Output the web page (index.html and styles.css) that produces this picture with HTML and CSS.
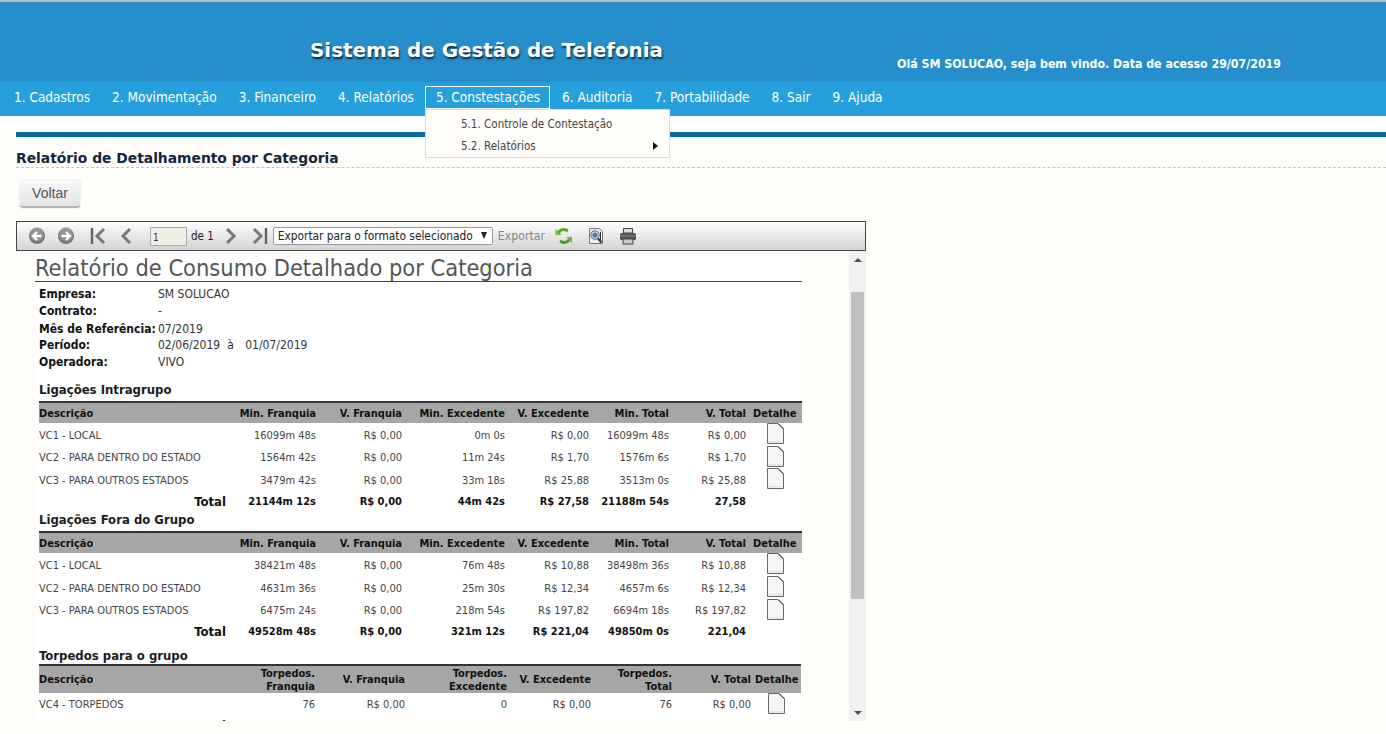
FILE: index.html
```html
<!DOCTYPE html>
<html lang="pt-BR">
<head>
    <meta charset="UTF-8">
    <title>Sistema de Gestão de Telefonia</title>
    <link rel="stylesheet" href="styles.css">
</head>
<body>
    <svg class="defs" width="0" height="0">
        <symbol id="doc" viewBox="0 0 17 21">
            <path d="M.5.5H11L16.500 6V20.500H.5Z" fill="#f6f6f6" stroke="#666"/>
            <path d="M11 .5L16.500 6" stroke="#333" fill="none"/>
            <path d="M1.500 18H15.500V19.500H1.500Z" fill="#e2e2e2"/>
        </symbol>
    </svg>

    <header class="top">
        <h1>Sistema de Gestão de Telefonia</h1>
        <span class="welcome">Olá SM SOLUCAO, seja bem vindo. Data de acesso 29/07/2019</span>
    </header>

    <nav class="menu">
        <a href="#">1. Cadastros</a>
        <a href="#">2. Movimentação</a>
        <a href="#">3. Financeiro</a>
        <a href="#">4. Relatórios</a>
        <div class="menu-open">
            <a href="#" class="active">5. Constestações</a>
            <div class="submenu">
                <a href="#">5.1. Controle de Contestação</a>
                <a href="#">5.2. Relatórios <i class="arrow"></i></a>
            </div>
        </div>
        <a href="#">6. Auditoria</a>
        <a href="#">7. Portabilidade</a>
        <a href="#">8. Sair</a>
        <a href="#">9. Ajuda</a>
    </nav>

    <main class="content">
        <div class="blue-line"></div>
        <h2 class="page-title">Relatório de Detalhamento por Categoria</h2>
        <button class="back">Voltar</button>

        <div class="toolbar">
            <svg class="tb-round" width="18" height="18" viewBox="0 0 18 18"><circle cx="9" cy="9" r="8" fill="#777"/><circle cx="9" cy="7" r="7" fill="#a8a8a8" opacity=".6"/><path d="M13.500 9H6M9 5L5 9l4 4" stroke="#fff" stroke-width="2.400" fill="none"/></svg>
            <svg class="tb-round" width="18" height="18" viewBox="0 0 18 18"><circle cx="9" cy="9" r="8" fill="#777"/><circle cx="9" cy="7" r="7" fill="#a8a8a8" opacity=".6"/><path d="M4.500 9H12M9 5l4 4-4 4" stroke="#fff" stroke-width="2.400" fill="none"/></svg>
            <svg class="tb-first" width="18" height="18" viewBox="0 0 18 18"><path d="M2 1V17" stroke="#666" stroke-width="2.500"/><path d="M14 2L7 9l7 7" stroke="#777" stroke-width="3" fill="none"/></svg>
            <svg class="tb-prev" width="14" height="18" viewBox="0 0 14 18"><path d="M11 2L4 9l7 7" stroke="#777" stroke-width="3" fill="none"/></svg>
            <input class="page-input" type="text" value="1">
            <span class="page-of">de 1</span>
            <svg class="tb-next" width="14" height="18" viewBox="0 0 14 18"><path d="M3 2l7 7-7 7" stroke="#777" stroke-width="3" fill="none"/></svg>
            <svg class="tb-last" width="18" height="18" viewBox="0 0 18 18"><path d="M3 2l7 7-7 7" stroke="#777" stroke-width="3" fill="none"/><path d="M15 1V17" stroke="#666" stroke-width="2.500"/></svg>
            <div class="format-select">Exportar para o formato selecionado <i></i></div>
            <span class="export">Exportar</span>
            <svg class="tb-refresh" width="18" height="18" viewBox="0 0 18 18"><path d="M3 8C3 4 7 1.500 11 3l2 1" stroke="#5aa832" stroke-width="3" fill="none"/><path d="M1 3V9H7Z" fill="#6cbc3c" transform="translate(-.5 -1)"/><path d="M15 10c0 4-4 6.500-8 5l-2-1" stroke="#4d9c2b" stroke-width="3" fill="none"/><path d="M17 16V10H11Z" fill="#6cbc3c"/></svg>
            <svg class="tb-search" width="18" height="18" viewBox="0 0 18 18"><path d="M2.500 1.500H12l3.500 3V16.500H2.500Z" fill="#eee" stroke="#777"/><circle cx="8" cy="8" r="4.200" fill="#dfe8f2" stroke="#555"/><circle cx="8" cy="8" r="2.600" fill="#3f78b4"/><path d="M11 11.500l3.500 4" stroke="#333" stroke-width="2"/><path d="M13.500 5V13" stroke="#333"/></svg>
            <svg class="tb-print" width="18" height="18" viewBox="0 0 18 18"><path d="M4.500 1.500H13.500V6H4.500Z" fill="#ddd" stroke="#444"/><rect x="1" y="6" width="16" height="7" rx="1.500" fill="#555"/><path d="M1 9H17" stroke="#888"/><path d="M4 12H14V17H4Z" fill="#ccc" stroke="#444"/></svg>
        </div>

        <div class="viewer">
            <div class="report">
                <h3 class="report-title">Relatório de Consumo Detalhado por Categoria</h3>
                <div class="info">
                    <div class="info-row row-18"><b>Empresa:</b><span>SM SOLUCAO</span></div>
                    <div class="info-row row-18"><b>Contrato:</b><span>-</span></div>
                    <div class="info-row"><b>Mês de Referência:</b><span>07/2019</span></div>
                    <div class="info-row"><b>Período:</b><span>02/06/2019 <span class="to">à</span> 01/07/2019</span></div>
                    <div class="info-row row-18"><b>Operadora:</b><span>VIVO</span></div>
                </div>

                <h4 class="section first">Ligações Intragrupo</h4>
                <table class="grid">
                    <colgroup><col class="c1"><col class="c2"><col class="c3"><col class="c4"><col class="c5"><col class="c6"><col class="c7"><col class="c8"></colgroup>
                    <thead><tr><th class="left">Descrição</th><th>Min. Franquia</th><th>V. Franquia</th><th>Min. Excedente</th><th>V. Excedente</th><th>Min. Total</th><th>V. Total</th><th class="left det">Detalhe</th></tr></thead>
                    <tbody>
                        <tr><td class="left">VC1 - LOCAL</td><td>16099m 48s</td><td>R$ 0,00</td><td>0m 0s</td><td>R$ 0,00</td><td>16099m 48s</td><td>R$ 0,00</td><td class="icon"><svg class="doc"><use href="#doc"/></svg></td></tr>
                        <tr class="short"><td class="left">VC2 - PARA DENTRO DO ESTADO</td><td>1564m 42s</td><td>R$ 0,00</td><td>11m 24s</td><td>R$ 1,70</td><td>1576m 6s</td><td>R$ 1,70</td><td class="icon"><svg class="doc"><use href="#doc"/></svg></td></tr>
                        <tr><td class="left">VC3 - PARA OUTROS ESTADOS</td><td>3479m 42s</td><td>R$ 0,00</td><td>33m 18s</td><td>R$ 25,88</td><td>3513m 0s</td><td>R$ 25,88</td><td class="icon"><svg class="doc"><use href="#doc"/></svg></td></tr>
                        <tr class="total"><td class="total-label">Total</td><td>21144m 12s</td><td>R$ 0,00</td><td>44m 42s</td><td>R$ 27,58</td><td>21188m 54s</td><td>27,58</td><td></td></tr>
                    </tbody>
                </table>

                <h4 class="section second">Ligações Fora do Grupo</h4>
                <table class="grid">
                    <colgroup><col class="c1"><col class="c2"><col class="c3"><col class="c4"><col class="c5"><col class="c6"><col class="c7"><col class="c8"></colgroup>
                    <thead><tr><th class="left">Descrição</th><th>Min. Franquia</th><th>V. Franquia</th><th>Min. Excedente</th><th>V. Excedente</th><th>Min. Total</th><th>V. Total</th><th class="left det">Detalhe</th></tr></thead>
                    <tbody>
                        <tr><td class="left">VC1 - LOCAL</td><td>38421m 48s</td><td>R$ 0,00</td><td>76m 48s</td><td>R$ 10,88</td><td>38498m 36s</td><td>R$ 10,88</td><td class="icon"><svg class="doc"><use href="#doc"/></svg></td></tr>
                        <tr><td class="left">VC2 - PARA DENTRO DO ESTADO</td><td>4631m 36s</td><td>R$ 0,00</td><td>25m 30s</td><td>R$ 12,34</td><td>4657m 6s</td><td>R$ 12,34</td><td class="icon"><svg class="doc"><use href="#doc"/></svg></td></tr>
                        <tr class="short"><td class="left">VC3 - PARA OUTROS ESTADOS</td><td>6475m 24s</td><td>R$ 0,00</td><td>218m 54s</td><td>R$ 197,82</td><td>6694m 18s</td><td>R$ 197,82</td><td class="icon"><svg class="doc"><use href="#doc"/></svg></td></tr>
                        <tr class="total"><td class="total-label">Total</td><td>49528m 48s</td><td>R$ 0,00</td><td>321m 12s</td><td>R$ 221,04</td><td>49850m 0s</td><td>221,04</td><td></td></tr>
                    </tbody>
                </table>

                <h4 class="section third">Torpedos para o grupo</h4>
                <table class="grid sms">
                    <colgroup><col class="s1"><col class="s2"><col class="s3"><col class="s4"><col class="s5"><col class="s6"><col class="s7"><col class="s8"></colgroup>
                    <thead><tr><th class="left">Descrição</th><th>Torpedos.<br>Franquia</th><th>V. Franquia</th><th>Torpedos.<br>Excedente</th><th>V. Excedente</th><th>Torpedos.<br>Total</th><th>V. Total</th><th class="left det">Detalhe</th></tr></thead>
                    <tbody>
                        <tr><td class="left">VC4 - TORPEDOS</td><td>76</td><td>R$ 0,00</td><td>0</td><td>R$ 0,00</td><td>76</td><td>R$ 0,00</td><td class="icon"><svg class="doc"><use href="#doc"/></svg></td></tr>
                        <tr class="total"><td class="total-label">Total</td><td>76</td><td>R$ 0,00</td><td>0</td><td>R$ 0,00</td><td>76</td><td>0,00</td><td></td></tr>
                    </tbody>
                </table>
            </div>
            <div class="scrollbar">
                <i class="up"></i>
                <div class="thumb"></div>
                <i class="down"></i>
            </div>
        </div>
    </main>
</body>
</html>
```

FILE: styles.css
```css
html, body {
    margin: 0;
    padding: 0;
    height: 734px;
    overflow: hidden;
}

body {
    background-color: #fffdf9;
    font-family: "DejaVu Sans Condensed", "DejaVu Sans", sans-serif;
    color: #222;
}

.defs {
    position: absolute;
}

.top {
    box-sizing: border-box;
    height: 82px;
    background-color: #268ecb;
    border-top: 2px solid #b5bcc2;
    display: flex;
    color: white;
}

.top h1 {
    margin: 36px 0 0 310px;
    width: 587px;
    flex: none;
    font-family: "DejaVu Sans", sans-serif;
    font-size: 19.900px;
    font-weight: bold;
    line-height: 26px;
    height: 26px;
    white-space: nowrap;
    text-shadow: 1px 2px 2px rgba(0, 0, 0, 0.7);
}

.welcome {
    margin-top: 54px;
    font-size: 12.270px;
    line-height: 16px;
    font-weight: bold;
    white-space: nowrap;
}

.menu {
    box-sizing: border-box;
    height: 34px;
    background-color: #25a0dc;
    display: flex;
    align-items: flex-start;
    padding: 4px 0 0 2px;
}

.menu a {
    color: white;
    text-decoration: none;
}

.menu > a, .menu-open > a {
    display: block;
    padding: 0 11px;
    font-size: 13.500px;
    line-height: 21px;
    border: 1px solid transparent;
    margin-right: -2px;
    white-space: nowrap;
}

.menu-open {
    position: relative;
}

.menu-open > a.active {
    border-color: white;
    padding: 0 9px 0 10px;
    margin: 0 0 0 1px;
}

.submenu {
    position: absolute;
    z-index: 10;
    top: 23px;
    left: 1px;
    width: 245px;
    height: 49px;
    padding-top: 3px;
    background-color: #fffefb;
    border: 1px solid #dcdcdc;
    box-sizing: border-box;
}

.submenu a {
    display: block;
    position: relative;
    color: #444;
    font-size: 11.550px;
    line-height: 22px;
    padding-left: 35px;
}

.arrow {
    position: absolute;
    top: 7px;
    right: 11px;
    border-left: 5px solid #111;
    border-top: 4px solid transparent;
    border-bottom: 4px solid transparent;
}

.content {
    padding: 16px 0 0 16px;
}

.blue-line {
    height: 5px;
    background-color: #0968a2;
}

.page-title {
    margin: 0;
    padding-top: 13px;
    height: 17px;
    padding-bottom: 0;
    line-height: 17px;
    font-size: 13.850px;
    font-weight: bold;
    color: #14263d;
    font-family: "DejaVu Sans", sans-serif;
    box-sizing: content-box;
    border-bottom: 1px dashed #c4c4c4;
}

.back {
    display: block;
    margin: 12px 0 13px 4px;
    width: 60px;
    height: 28px;
    padding: 0 0 1px;
    font-family: "Liberation Sans", sans-serif;
    font-size: 14px;
    color: #555;
    border: none;
    border-radius: 3px;
    background: linear-gradient(#f8f8f8, #e4e4e4);
    border-bottom: 2px solid #b4b4b4;
    box-shadow: 0 0 2px rgba(0, 0, 0, 0.2);
}

.toolbar {
    box-sizing: border-box;
    width: 850px;
    height: 30px;
    border: 1px solid #444;
    background: linear-gradient(#fdfdfd, #d4d4d4);
    display: flex;
    align-items: center;
    font-size: 11px;
}

.tb-round:first-child { margin-left: 11px; }
.tb-round + .tb-round { margin-left: 11px; }
.tb-first { margin-left: 15px; }
.tb-prev { margin-left: 11px; }

.page-input {
    box-sizing: border-box;
    width: 37px;
    height: 19px;
    margin-left: 17px;
    padding: 3px 0 0 2px;
    font-family: "DejaVu Sans Condensed", sans-serif;
    font-size: 10px;
    border: 1px solid #aaa;
    background-color: #eeeee4;
    color: #333;
}

.page-of { margin-left: 4px; color: #222; font-size: 11.500px; }
.tb-next { margin-left: 10px; }
.tb-last { margin-left: 13px; }

.format-select {
    box-sizing: border-box;
    flex: none;
    width: 220px;
    height: 18px;
    margin-left: 4px;
    padding-left: 4px;
    font-size: 11.800px;
    line-height: 16px;
    background-color: white;
    border: 1px solid #999;
    border-radius: 2px;
    position: relative;
    white-space: nowrap;
}

.format-select i {
    position: absolute;
    right: 5px;
    top: 4px;
    border-top: 7px solid #222;
    border-left: 3.500px solid transparent;
    border-right: 3.500px solid transparent;
}

.export { margin-left: 5px; color: #888; font-size: 12.200px; }
.tb-refresh { margin-left: 10px; }
.tb-search { margin-left: 14px; }
.tb-print { margin-left: 14px; }

.viewer {
    width: 850px;
    height: 470px;
    display: flex;
    overflow: hidden;
}

.report {
    box-sizing: border-box;
    width: 767px;
    margin-left: 19px;
    height: 470px;
    overflow: hidden;
    background-color: white;
    font-size: 11px;
}

.report-title {
    margin: 0;
    height: 30px;
    line-height: 35px;
    font-size: 23.400px;
    font-weight: normal;
    color: #555;
    border-bottom: 1px solid #444;
    white-space: nowrap;
    font-family: "DejaVu Sans Condensed", sans-serif;
}

.info {
    padding: 3.500px 0 0 4px;
}

.info-row {
    display: grid;
    grid-template-columns: 119px 1fr;
    height: 16.500px;
    line-height: 16px;
    font-size: 12px;
    color: #333;
}

.row-18 {
    height: 17.500px;
}

.info-row b {
    color: #111;
}

.to {
    margin: 0 8px 0 3.500px;
}

.section {
    margin: 0;
    padding-left: 4px;
    font-size: 13px;
    line-height: 16px;
    font-weight: bold;
    color: #1b1b1b;
}

.section.first { padding-top: 10.500px; padding-bottom: 3px; }
.section.second { padding-top: 1px; padding-bottom: 3px; }
.section.third { padding-top: 7px; padding-bottom: 0; }

.grid {
    width: 763px;
    margin-left: 4px;
    table-layout: fixed;
    border-collapse: collapse;
    font-size: 11px;
}

.grid.sms { width: 762px; }

.c1 { width: 190px; }
.c2 { width: 90px; }
.c3 { width: 86px; }
.c4 { width: 103px; }
.c5 { width: 84px; }
.c6 { width: 80px; }
.c7 { width: 77px; }
.c8 { width: 53px; }

.s1 { width: 190px; }
.s2 { width: 89px; }
.s3 { width: 90px; }
.s4 { width: 102px; }
.s5 { width: 84px; }
.s6 { width: 81px; }
.s7 { width: 79px; }
.s8 { width: 47px; }

.grid th {
    background-color: #a6a6a6;
    border-top: 2px solid #333;
    height: 19px;
    padding: 1px 3px 0;
    text-align: right;
    font-weight: bold;
    color: #111;
    line-height: 13px;
    white-space: nowrap;
}

.grid th.left {
    text-align: left;
    padding-left: 0;
}

.grid td {
    height: 21px;
    padding: 2px 3px 0;
    text-align: right;
    color: #444;
    white-space: nowrap;
}

.grid tr.short td {
    height: 20px;
}

.grid td.left {
    text-align: left;
    padding-left: 0;
}

.grid th.det { padding-left: 4px; }
.grid.sms th.det { padding-left: 1px; }

.grid td.icon {
    text-align: left;
    padding: 0 0 0 18px;
    vertical-align: top;
}

.grid.sms td {
    height: 23px;
    padding-top: 0;
}

.grid.sms td.icon { padding-left: 14px; }

.doc {
    display: block;
    width: 17px;
    height: 21px;
}

.grid tr.total td {
    height: 18px;
    font-weight: bold;
    color: #111;
}

.grid.sms tr.total td {
    padding-top: 1px;
}

.grid td.total-label {
    font-size: 13px;
}

.scrollbar {
    box-sizing: border-box;
    width: 17px;
    margin-left: 47px;
    height: 470px;
    background-color: #f1f1f1;
    position: relative;
}

.thumb {
    position: absolute;
    top: 41px;
    left: 2px;
    width: 13px;
    height: 307px;
    background-color: #c0c0c0;
}

.up, .down {
    position: absolute;
    left: 4.500px;
    border-left: 4px solid transparent;
    border-right: 4px solid transparent;
}

.up {
    top: 7px;
    border-bottom: 4px solid #505050;
}

.down {
    bottom: 6px;
    border-top: 4px solid #505050;
}
```
